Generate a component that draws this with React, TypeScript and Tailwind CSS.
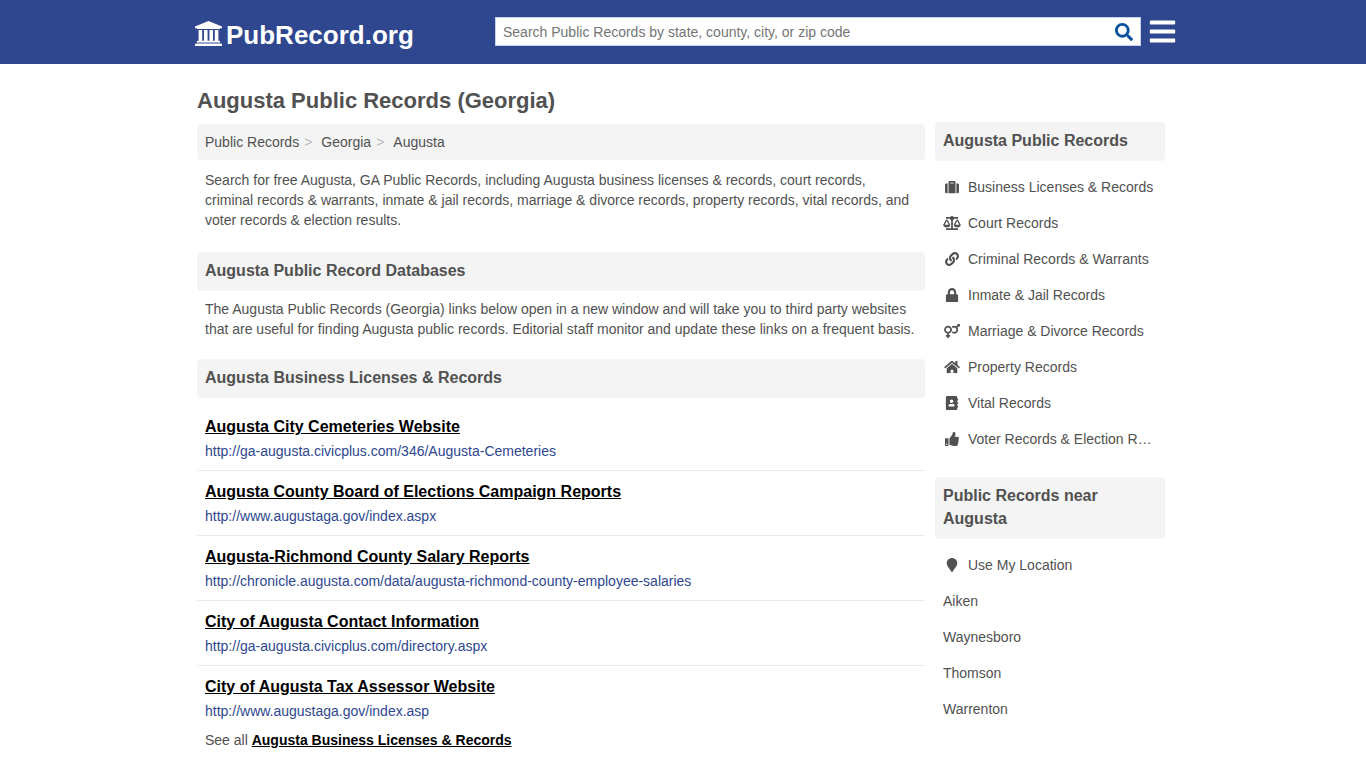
import React, { useState } from 'react';
import {
  FaAddressBook,
  FaBalanceScale,
  FaBars,
  FaHome,
  FaLink,
  FaLock,
  FaMapMarker,
  FaSearch,
  FaSuitcase,
  FaThumbsUp,
  FaVenusMars,
} from 'react-icons/fa';

const categories = [
  { label: 'Business Licenses & Records', icon: FaSuitcase },
  { label: 'Court Records', icon: FaBalanceScale },
  { label: 'Criminal Records & Warrants', icon: FaLink },
  { label: 'Inmate & Jail Records', icon: FaLock },
  { label: 'Marriage & Divorce Records', icon: FaVenusMars },
  { label: 'Property Records', icon: FaHome },
  { label: 'Vital Records', icon: FaAddressBook },
  { label: 'Voter Records & Election Results', icon: FaThumbsUp },
];

const nearby = ['Aiken', 'Waynesboro', 'Thomson', 'Warrenton'];

const databases = [
  { title: 'Augusta City Cemeteries Website', url: 'http://ga-augusta.civicplus.com/346/Augusta-Cemeteries' },
  { title: 'Augusta County Board of Elections Campaign Reports', url: 'http://www.augustaga.gov/index.aspx' },
  { title: 'Augusta-Richmond County Salary Reports', url: 'http://chronicle.augusta.com/data/augusta-richmond-county-employee-salaries' },
  { title: 'City of Augusta Contact Information', url: 'http://ga-augusta.civicplus.com/directory.aspx' },
  { title: 'City of Augusta Tax Assessor Website', url: 'http://www.augustaga.gov/index.asp' },
];

function CourthouseIcon({ className }: { className?: string }) {
  return (
    <svg viewBox="0 0 1920 1792" fill="currentColor" aria-hidden="true" className={className}>
      <path d="M960 0l960 384v128h-128q0 26-20.5 45t-48.5 19h-1526q-28 0-48.5-19t-20.5-45h-128v-128zm-704 640h256v768h128v-768h256v768h128v-768h256v768h128v-768h256v768h59q28 0 48.5 19t20.5 45v64h-1664v-64q0-26 20.5-45t48.5-19h59v-768zm1595 960q28 0 48.5 19t20.5 45v128h-1920v-128q0-26 20.5-45t48.5-19h1782z" />
    </svg>
  );
}

function SectionHeading({ children }: { children: React.ReactNode }) {
  return (
    <h2 className="rounded bg-[#f4f4f4] px-2 pt-[7px] pb-[9px] text-base leading-[23px] font-bold">{children}</h2>
  );
}

function SideLink({ label, icon: Icon }: { label: string; icon?: React.ComponentType<{ className?: string }> }) {
  return (
    <li>
      <a href="#" className="flex h-9 items-center gap-[7px] px-2 hover:underline">
        {Icon && <Icon className="h-[14px] w-[18px] shrink-0" />}
        <span className="truncate">{label}</span>
      </a>
    </li>
  );
}

function Header() {
  const [query, setQuery] = useState('');

  return (
    <header className="bg-[#2e478f]">
      <div className="mx-auto flex h-16 max-w-[988px] items-center justify-between gap-4 pl-[6px]">
        <a href="#" className="flex items-center gap-1 pt-[3px] text-[26px] font-bold text-white">
          <CourthouseIcon className="w-[27px] shrink-0" />
          <span className="pt-[3px]">PubRecord.org</span>
        </a>
        <div className="flex min-w-0 items-center gap-[7px] pb-[2px]">
          <form
            role="search"
            className="flex h-[29px] w-[646px] min-w-0 items-center border border-[#c5d3ea] bg-white"
            onSubmit={(e) => e.preventDefault()}
          >
            <input
              type="text"
              aria-label="Search Public Records"
              placeholder="Search Public Records by state, county, city, or zip code"
              value={query}
              onChange={(e) => setQuery(e.target.value)}
              className="min-w-0 flex-1 px-[7px] pt-[2px] text-sm placeholder-[#757575] outline-none"
            />
            <button type="submit" aria-label="Search" className="px-[7px] pt-[2px] text-[#0a529c]">
              <FaSearch className="text-lg" />
            </button>
          </form>
          <button type="button" aria-label="Menu" className="text-white">
            <FaBars className="size-[29px]" />
          </button>
        </div>
      </div>
    </header>
  );
}

export default function App() {
  return (
    <div className="min-h-screen bg-white font-['Liberation_Sans',Arial,sans-serif] text-sm leading-5 text-[#515151]">
      <Header />

      <div className="mx-auto flex max-w-[980px] gap-[10px] pr-2 pl-1">
        <main className="min-w-0 flex-1 pt-5">
          <h1 className="pt-px pb-[7px] text-[22px] leading-8 font-bold">Augusta Public Records (Georgia)</h1>

          <nav aria-label="Breadcrumb" className="rounded bg-[#f4f4f4] p-2">
            <ol className="flex">
              <li><a href="#">Public Records</a></li>
              <li>
                <span className="pr-[9px] pl-[5px] text-[#bbb]">&gt;</span>
                <a href="#">Georgia</a>
              </li>
              <li>
                <span className="pr-[9px] pl-[5px] text-[#bbb]">&gt;</span>
                <a href="#">Augusta</a>
              </li>
            </ol>
          </nav>

          <p className="mt-[10px] mb-[22px] px-2">
            Search for free Augusta, GA Public Records, including Augusta business licenses &amp; records, court
            records, criminal records &amp; warrants, inmate &amp; jail records, marriage &amp; divorce records,
            property records, vital records, and voter records &amp; election results.
          </p>

          <SectionHeading>Augusta Public Record Databases</SectionHeading>
          <p className="mt-2 mb-5 px-2">
            The Augusta Public Records (Georgia) links below open in a new window and will take you to third party
            websites that are useful for finding Augusta public records. Editorial staff monitor and update these
            links on a frequent basis.
          </p>

          <SectionHeading>Augusta Business Licenses &amp; Records</SectionHeading>
          <ul className="mt-2">
            {databases.map((db) => (
              <li key={db.title} className="border-b border-[#ebebeb] px-2 pt-2 pb-[7px] last:border-b-0 last:pb-0">
                <a href={db.url} target="_blank" rel="noreferrer" className="block">
                  <span className="block text-base leading-[25px] font-bold text-black underline">{db.title}</span>
                  <span className="block leading-6 text-[#2e478f]">{db.url}</span>
                </a>
              </li>
            ))}
          </ul>
          <p className="mt-[7px] px-2">
            See all{' '}
            <a href="#" className="font-bold text-black underline">Augusta Business Licenses &amp; Records</a>
          </p>
        </main>

        <aside className="w-[230px] shrink-0 pt-[58px]">
          <SectionHeading>Augusta Public Records</SectionHeading>
          <ul className="mt-2 mb-5">
            {categories.map((c) => (
              <SideLink key={c.label} label={c.label} icon={c.icon} />
            ))}
          </ul>

          <SectionHeading>Public Records near Augusta</SectionHeading>
          <ul className="mt-2">
            <SideLink label="Use My Location" icon={FaMapMarker} />
            {nearby.map((city) => (
              <SideLink key={city} label={city} />
            ))}
          </ul>
        </aside>
      </div>
    </div>
  );
}
